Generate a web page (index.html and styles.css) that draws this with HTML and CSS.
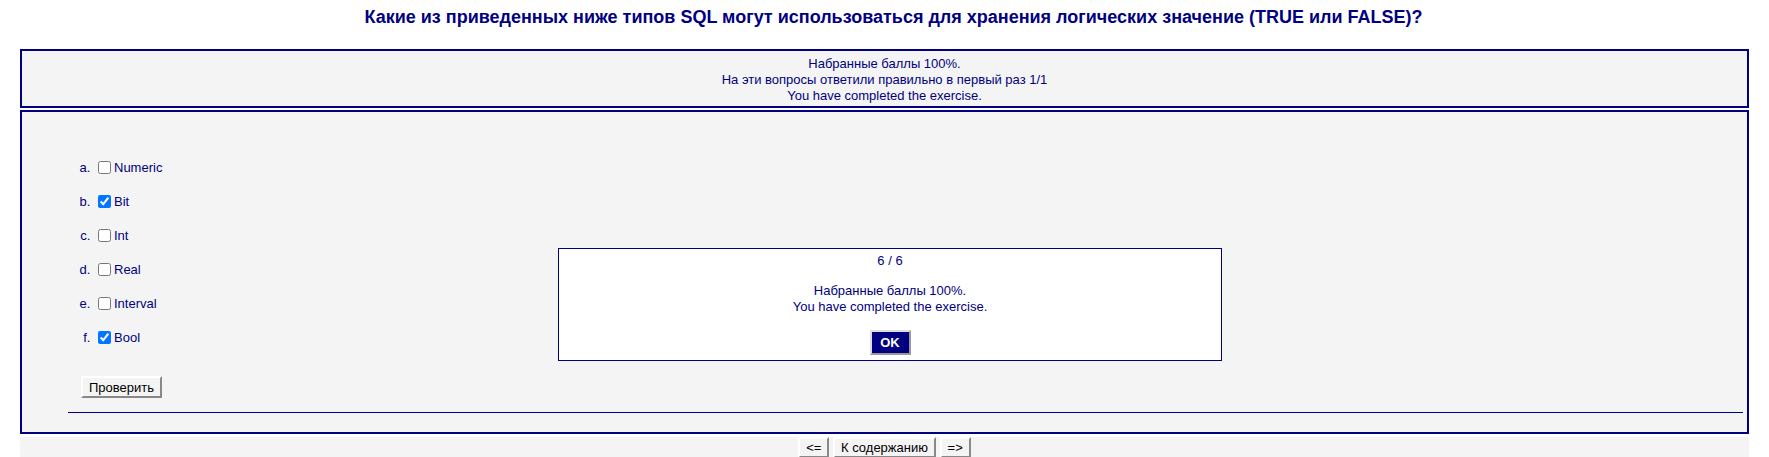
FILE: index.html
```html
<!DOCTYPE html>
<html lang="ru">
<head>
    <meta charset="UTF-8">
    <title>Тест SQL</title>
    <link rel="stylesheet" href="styles.css">
</head>
<body>
    <h1 class="title">Какие из приведенных ниже типов SQL могут использоваться для хранения логических значение (TRUE или FALSE)?</h1>

    <div class="feedback">
        Набранные баллы 100%.<br>
        На эти вопросы ответили правильно в первый раз 1/1<br>
        You have completed the exercise.
    </div>

    <div class="quiz">
        <ol class="answers">
            <li><input type="checkbox">Numeric</li>
            <li><input type="checkbox" checked>Bit</li>
            <li><input type="checkbox">Int</li>
            <li><input type="checkbox">Real</li>
            <li><input type="checkbox">Interval</li>
            <li><input type="checkbox" checked>Bool</li>
        </ol>
        <div class="check-row">
            <button class="btn">Проверить</button>
        </div>
        <hr class="rule">
    </div>

    <div class="nav">
        <button class="btn">&lt;=</button>
        <button class="btn">К содержанию</button>
        <button class="btn">=&gt;</button>
    </div>

    <div class="popup">
        <div class="popup-count">6 / 6</div>
        <div class="popup-msg">
            Набранные баллы 100%.<br>
            You have completed the exercise.
        </div>
        <button class="ok">OK</button>
    </div>
</body>
</html>
```

FILE: styles.css
```css
/* общие стили */
body {
    margin: 0;
    font-family: "Liberation Sans", Arial, sans-serif;
    font-size: 13px;
    color: #000080;
    background: #fff;
}

.title {
    margin: 0 0 21px;
    padding: 6px 0 0 18px;
    font-size: 18px;
    line-height: 22px;
    font-weight: bold;
    text-align: center;
    color: #000080;
}

.feedback {
    margin: 0 20px;
    padding: 5px 0 2px;
    border: 2px solid #000080;
    background: #f4f4f4;
    text-align: center;
    line-height: 16px;
}

.quiz {
    margin: 2px 20px 0;
    padding: 46px 0 19px;
    border: 2px solid #000080;
    background: #f4f4f4;
}

.answers {
    margin: 0;
    padding-left: 72px;
    list-style: lower-alpha;
}

.answers li {
    line-height: 20px;
    margin-bottom: 14px;
}

.answers input {
    vertical-align: -2px;
}

.check-row {
    margin: 28px 0 0 59px;
}

.btn {
    font-family: "Liberation Sans", Arial, sans-serif;
    font-size: 13px;
    color: #000080;
    background: #f4f4f4;
    padding: 2px 6px;
    border: 2px solid;
    border-color: #fff #888 #888 #fff;
    border-radius: 0;
    cursor: pointer;
}

.check-row .btn {
    height: 22px;
    color: #000;
}

.rule {
    margin: 14px 4px 0 46px;
    border: 0;
    border-top: 1px solid #000080;
}

.nav {
    margin: 3px 20px 0;
    height: 22px;
    background: #f4f4f4;
    text-align: center;
}

.nav .btn {
    height: 21px;
    padding: 0 6px;
    color: #000;
}

/* окно результата поверх вопроса */
.popup {
    position: absolute;
    left: 558px;
    top: 248px;
    width: 662px;
    height: 111px;
    border: 1px solid #000080;
    background: #fff;
    text-align: center;
    line-height: 16px;
}

.popup-count {
    margin-top: 4px;
}

.popup-msg {
    margin-top: 14px;
}

.ok {
    margin-top: 15px;
    width: 41px;
    height: 25px;
    padding: 0;
    font-family: "Liberation Sans", Arial, sans-serif;
    font-size: 13px;
    font-weight: bold;
    color: #fff;
    background: #000080;
    border: 2px solid;
    border-color: #ddd #999 #999 #ddd;
}
```
